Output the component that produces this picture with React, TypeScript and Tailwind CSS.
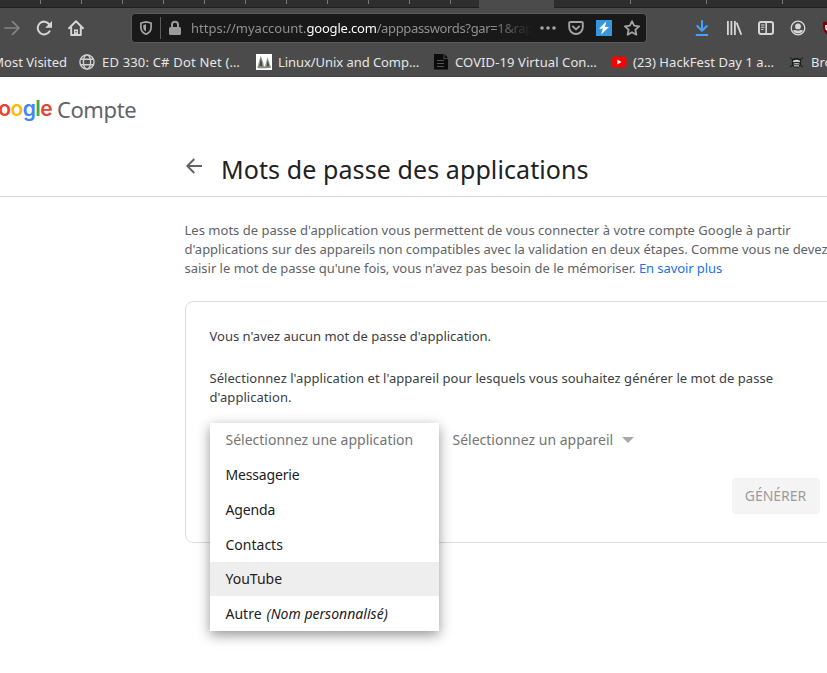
import type { ReactNode } from "react";

const stroke = {
  fill: "none",
  stroke: "currentColor",
  strokeWidth: 2,
  strokeLinecap: "round" as const,
  strokeLinejoin: "round" as const,
};

function Icon({ className = "", children }: { className?: string; children: ReactNode }) {
  return (
    <svg viewBox="0 0 16 16" className={`size-4 shrink-0 ${className}`}>
      {children}
    </svg>
  );
}

function TabSeparators({ className }: { className: string }) {
  return <div className={`h-1 shrink-0 border-l border-[#777777] ${className}`} />;
}

function TabStrip() {
  return (
    <div className="flex h-2 bg-[#4b4b4b]">
      <div className="flex h-2 w-[479px] shrink-0 border-b border-[#1f1f1f] bg-[#2e2e2e] pl-10">
        {Array.from({ length: 11 }, (_, i) => (
          <TabSeparators key={i} className="w-[41px]" />
        ))}
      </div>
      <div className="w-[75px] shrink-0" />
      <div className="flex h-2 flex-1 overflow-hidden border-b border-[#1f1f1f] bg-[#2e2e2e] pl-[76px]">
        <TabSeparators className="w-[76px]" />
        <TabSeparators className="w-[76px]" />
        <TabSeparators className="w-[76px]" />
      </div>
    </div>
  );
}

function UrlBar() {
  return (
    <div className="ml-[47px] flex h-[30px] w-[516px] shrink-0 items-center rounded-[4px] border border-[#5b5b5b] bg-[#191919] text-[#a3a3a3]">
      <Icon className="ml-[6px]">
        <path {...stroke} strokeWidth={1.7} d="M8 1.9 13.1 3v4.5c0 3.1-2 5.4-5.1 6.7-3.1-1.3-5.1-3.6-5.1-6.7V3z" />
        <path fill="currentColor" d="M8 4.3v7.2c-1.8-1-2.7-2.3-2.7-4V4.9z" />
      </Icon>
      <div className="ml-[6px] h-[22px] border-l border-[#5b5b5b]" />
      <Icon className="ml-[6px] text-[#9c9c9c]">
        <path {...stroke} d="M5 8V4.8a3 3 0 0 1 6 0V8" />
        <rect x="2" y="7" width="12" height="8" rx="1.5" fill="currentColor" />
      </Icon>
      <div className="ml-2 w-[341px] shrink-0 overflow-hidden pt-[2px] whitespace-nowrap text-[13px] text-[#909090] [mask-image:linear-gradient(to_right,black_88%,transparent)]">
        https://myaccount.
        <span className="tracking-[-0.2px] text-[#f9f9fa]">google.com</span>
        <span className="tracking-[-0.35px]">/apppasswords?gar=1&amp;rap</span>
      </div>
      <Icon className="ml-2">
        <circle cx="2" cy="8" r="1.8" fill="currentColor" />
        <circle cx="8" cy="8" r="1.8" fill="currentColor" />
        <circle cx="14" cy="8" r="1.8" fill="currentColor" />
      </Icon>
      <Icon className="ml-3">
        <path {...stroke} strokeWidth={1.9} d="M2.2 2h11.6a1 1 0 0 1 1 1v4.2a6.8 6.8 0 0 1-13.6 0V3a1 1 0 0 1 1-1z" />
        <path {...stroke} strokeWidth={1.9} d="m4.8 6.4 3.2 3 3.2-3" />
      </Icon>
      <Icon className="ml-3">
        <rect width="16" height="16" fill="#3498db" />
        <path fill="#ffffff" d="M10.2 1.6 3 8.8h3.8L5.2 14.4 13 7H9z" />
      </Icon>
      <Icon className="ml-3">
        <path {...stroke} strokeWidth={1.8} d="m8 1.1 2.100 4.600 5 .6-3.700 3.400 1 5L8 12.200l-4.400 2.500 1-5L.9 6.300l5-.6z" />
      </Icon>
    </div>
  );
}

function Toolbar() {
  return (
    <div className="flex h-10 items-center overflow-hidden bg-[#4b4b4b] text-[#d6d6d6]">
      <Icon className="ml-1 text-[#858585]">
        <path {...stroke} strokeWidth={1.7} d="M.8 8h14M8.5 1.7 15 8l-6.500 6.300" />
      </Icon>
      <Icon className="ml-4">
        <path {...stroke} d="M13.600 11.300a6.400 6.400 0 1 1-.3-7" />
        <path fill="currentColor" d="M16 1v6.800H9.200z" />
      </Icon>
      <Icon className="ml-4">
        <path {...stroke} strokeWidth={1.9} d="M1 8.2 8 1.3l7 6.9M3.2 7.5V15h9.6V7.5" />
        <path fill="currentColor" d="M6 9.4h4V15H6z" />
        <rect x="7.5" y="11" width="1.2" height="1.4" fill="#4b4b4b" />
      </Icon>
      <UrlBar />
      <Icon className="ml-[47px] text-[#45a1ff]">
        <path {...stroke} d="M8 1v9.5M3.2 6 8 10.8 12.8 6M2.6 15h10.8" />
      </Icon>
      <Icon className="ml-4">
        <path {...stroke} strokeWidth={1.8} strokeLinecap="butt" d="M1.9 1v14M5.4 1v14M8.9 1v14M10.6 2.6l4.7 12.1" />
      </Icon>
      <Icon className="ml-4">
        <rect {...stroke} x="1" y="2" width="14" height="12" rx="2" />
        <path {...stroke} strokeWidth={1.6} d="M8.2 2v12" />
        <path {...stroke} strokeWidth={1} d="M3.5 5h2.6M3.5 7.2h2.6M3.5 9.4h1.6" />
      </Icon>
      <Icon className="ml-4">
        <circle {...stroke} strokeWidth={1.3} cx="8" cy="8" r="6.8" />
        <circle cx="8" cy="6.4" r="2.9" fill="currentColor" />
        <path fill="currentColor" d="M3 10.7c1.2-.9 2.1-.6 3-.4 1.3.5 2.7.5 4 0 .9-.2 1.8-.5 3 .4-1 1.7-2.9 2.8-5 2.8s-4-1.1-5-2.8z" />
      </Icon>
      <Icon className="ml-4">
        <path fill="#800000" d="M8 0c2.2 1.3 4.4 2 7 2v5c0 4-2.500 7-7 9-4.500-2-7-5-7-9V2c2.600 0 4.800-.7 7-2z" />
        <path stroke="#ffffff" strokeWidth="1.5" fill="none" d="M4 5v4q1.500 2 3 0V5" />
      </Icon>
    </div>
  );
}

function Bookmark({ className, icon, children }: { className: string; icon: ReactNode; children: ReactNode }) {
  return (
    <div className={`flex shrink-0 items-center whitespace-nowrap ${className}`}>
      {icon}
      <span className="pt-[2px]">{children}</span>
    </div>
  );
}

function BookmarksBar() {
  return (
    <div className="flex h-[29px] items-stretch overflow-hidden border-b border-[#424242] bg-[#4b4b4b] text-[13px] text-[#e6e6e6]">
      <div className="flex w-[79px] shrink-0 items-center justify-end pt-[2px] pr-3 whitespace-nowrap">Most Visited</div>
      <Bookmark
        className="w-[177px] gap-[7px] tracking-[0.18px]"
        icon={
          <Icon className="text-[#d0d0d0]">
            <g {...stroke} strokeWidth={1.4}>
              <circle cx="8" cy="8" r="7.1" />
              <ellipse cx="8" cy="8" rx="3.600" ry="7.100" />
              <path d="M1.800 5.200h12.400M1.800 10.800h12.400" />
            </g>
          </Icon>
        }
      >
        ED 330: C# Dot Net (…
      </Bookmark>
      <Bookmark
        className="w-[178px] gap-[6px] tracking-[-0.06px]"
        icon={
          <Icon>
            <rect width="16" height="16" fill="#ffffff" />
            <path fill="#9aa096" d="m4.800 1.500 1.500 4.500 1 3 .8 4H1.600l.9-4 .9-3zM11.500 3l1.400 4 .9 3 .8 3H8.800l.7-3 .9-3z" />
            <path fill="#3c5637" d="m4.800 4 1.200 4.500.6 4H3.200l.6-3zM11.700 6l.8 3 .8 4h-2.800z" />
            <path fill="#8b8d89" d="M1 12.600h6l8-.3v1.500l-5 .4-8 .1z" />
          </Icon>
        }
      >
        Linux/Unix and Comp…
      </Bookmark>
      <Bookmark
        className="w-[177px] gap-[5px] tracking-[0.1px]"
        icon={
          <Icon>
            <path fill="#0c0c0c" d="M0 0h9.500v5H14v10.500H0z" />
            <path fill="#0c0c0c" d="m10.500 0 3.500 4h-3.500z" />
            <path stroke="#555555" d="M3 6.500h7M3 9.500h7M3 12.500h7" />
          </Icon>
        }
      >
        COVID-19 Virtual Con…
      </Bookmark>
      <Bookmark
        className="w-[178px] gap-[6px] tracking-[0.06px]"
        icon={
          <Icon>
            <rect x=".5" y="2.500" width="15" height="11" rx="2.700" fill="#ff0000" />
            <path fill="#ffffff" d="m6.300 5.600 4.200 2.400-4.200 2.400z" />
          </Icon>
        }
      >
        (23) HackFest Day 1 a…
      </Bookmark>
      <Bookmark
        className="gap-[6px]"
        icon={
          <Icon>
            <path stroke="#262626" strokeWidth="1.500" d="m1 3.500 3 2M14 3.500l-3 2M1 13l3-2M14 13l-3-2" />
            <path fill="#151515" d="M2.800 6.500c1-3.500 8.400-3.500 9.400 0l-.5 4.500-2 2.500H5.300L3.300 11z" />
            <path fill="#c3d6d2" d="M3.600 7.200C5 5.200 10 5.200 11.400 7.200l-.9 1.100-3-.3-3 .3zM4.500 9.600l3-.6 3 .6-.6 2.800H5.100z" />
            <path stroke="#151515" strokeWidth=".9" d="M5 10.800h5" />
          </Icon>
        }
      >
        Bro
      </Bookmark>
    </div>
  );
}

function AccountHeader() {
  return (
    <header className="flex h-[120px] flex-col justify-between border-b border-[#dadce0] text-[#202124]">
      <div className="mt-4 flex h-8 items-center">
        <div className="flex w-[52px] shrink-0 justify-end overflow-hidden font-['Inter'] text-[21px] leading-8 font-semibold tracking-[-0.6px]">
          <span className="text-[#4285f4]">G</span>
          <span className="text-[#ea4335]">o</span>
          <span className="text-[#fbbc05]">o</span>
          <span className="text-[#4285f4]">g</span>
          <span className="text-[#34a853]">l</span>
          <span className="text-[#ea4335]">e</span>
        </div>
        <span className="ml-[5px] text-[22px] leading-8 tracking-[-0.42px] text-[#5f6368]">Compte</span>
      </div>
      <div className="mb-[11px] flex h-8 items-center">
        <svg viewBox="0 0 16 16" className="mb-[7px] ml-[186px] size-4 shrink-0 text-[#5f6368]">
          <path {...stroke} strokeWidth={1.900} strokeLinecap="butt" strokeLinejoin="miter" d="M16 8H1.500M8.300 1 1.300 8l7 7" />
        </svg>
        <h1 className="ml-[19px] text-[25px] leading-8 tracking-[0.09px] whitespace-nowrap">Mots de passe des applications</h1>
      </div>
    </header>
  );
}

function AppMenu() {
  return (
    <ul className="absolute top-[121px] left-6 grid h-[208px] w-[229px] grid-rows-6 bg-white text-[14px] text-[#202124] shadow-[0_4px_12px_rgba(0,0,0,0.42)] *:flex *:items-center *:pl-4 *:whitespace-nowrap">
      <li className="pb-[2px] text-[#757575]">Sélectionnez une application</li>
      <li className="tracking-[-0.16px]">Messagerie</li>
      <li className="tracking-[-0.12px]">Agenda</li>
      <li>Contacts</li>
      <li className="bg-[#eeeeee]">YouTube</li>
      <li>
        Autre<em className="ml-[5px] tracking-[0.02px]">(Nom personnalisé)</em>
      </li>
    </ul>
  );
}

function PasswordCard() {
  return (
    <section className="relative mt-[23px] h-[242px] w-[660px] rounded-lg border border-[#dadce0] px-6 pt-[25px] text-[#3c4043]">
      <p>Vous n'avez aucun mot de passe d'application.</p>
      <p className="mt-[23px] tracking-[0.05px] whitespace-nowrap">
        Sélectionnez l'application et l'appareil pour lesquels vous souhaitez générer le mot de passe
        <br />
        d'application.
      </p>
      <div className="mt-[22px] ml-[243px] flex h-5 items-center gap-[9px] text-[14px] text-[#757575]">
        <span className="whitespace-nowrap">Sélectionnez un appareil</span>
        <svg viewBox="0 0 12 6" className="mt-px h-[6px] w-3 text-[#aaaaaa]">
          <path fill="currentColor" d="M0 0h12L6 6z" />
        </svg>
      </div>
      <button className="mt-[29px] ml-[522px] flex h-9 w-[88px] items-center justify-center rounded-[3px] bg-[#f4f4f4] pb-[2px] text-[14px] text-[#9b9b9b]">
        GÉNÉRER
      </button>
      <AppMenu />
    </section>
  );
}

export default function App() {
  return (
    <div className="h-[673px] w-full overflow-hidden bg-white font-['Noto_Sans',sans-serif]">
      <TabStrip />
      <Toolbar />
      <BookmarksBar />
      <AccountHeader />
      <main className="pt-[24px] pl-[184.5px] text-[13px] leading-[19px]">
        <p className="whitespace-nowrap text-[#5f6368]">
          <span className="tracking-[0.02px]">
            Les mots de passe d'application vous permettent de vous connecter à votre compte Google à partir
          </span>
          <br />
          <span className="tracking-[-0.02px]">
            d'applications sur des appareils non compatibles avec la validation en deux étapes. Comme vous ne devez
          </span>
          <br />
          <span className="tracking-[-0.013px]">
            saisir le mot de passe qu'une fois, vous n'avez pas besoin de le mémoriser.{" "}
          </span>
          <a className="tracking-[-0.09px] text-[#1a73e8]">En savoir plus</a>
        </p>
        <PasswordCard />
      </main>
    </div>
  );
}
